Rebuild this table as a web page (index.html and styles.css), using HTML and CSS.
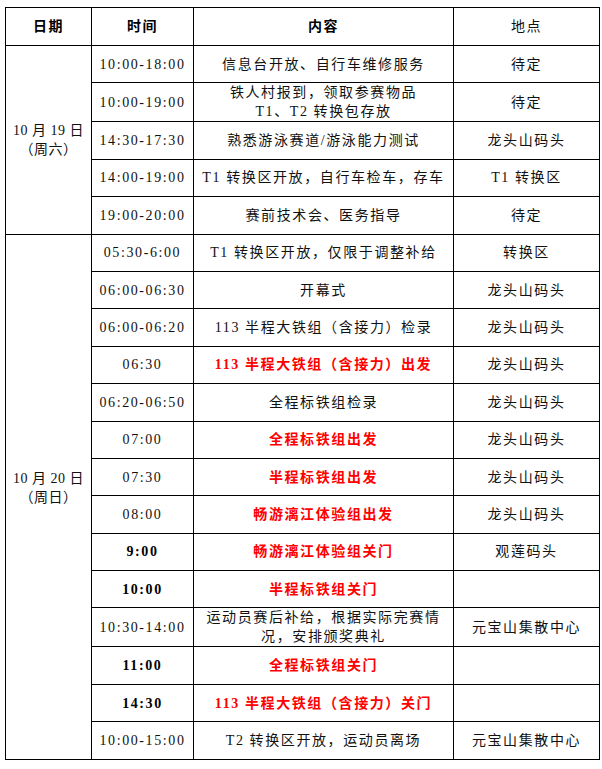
FILE: index.html
```html
<!DOCTYPE html>
<html lang="zh-CN">
<head>
<meta charset="utf-8">
<title>赛事日程</title>
<link rel="stylesheet" href="styles.css">
</head>
<body>
<table class="schedule">
  <colgroup>
    <col class="c-date">
    <col class="c-time">
    <col class="c-content">
    <col class="c-place">
  </colgroup>
  <thead>
    <tr class="head">
      <th class="b">日期</th>
      <th class="b">时间</th>
      <th class="b">内容</th>
      <th>地点</th>
    </tr>
  </thead>
  <tbody>
    <tr>
      <td rowspan="5" class="date">10 月 19 日<br>（周六）</td>
      <td>10:00-18:00</td>
      <td>信息台开放、自行车维修服务</td>
      <td>待定</td>
    </tr>
    <tr>
      <td>10:00-19:00</td>
      <td class="two">铁人村报到，领取参赛物品<br>T1、T2 转换包存放</td>
      <td>待定</td>
    </tr>
    <tr>
      <td>14:30-17:30</td>
      <td>熟悉游泳赛道/游泳能力测试</td>
      <td>龙头山码头</td>
    </tr>
    <tr>
      <td>14:00-19:00</td>
      <td>T1 转换区开放，自行车检车，存车</td>
      <td>T1 转换区</td>
    </tr>
    <tr>
      <td>19:00-20:00</td>
      <td>赛前技术会、医务指导</td>
      <td>待定</td>
    </tr>
    <tr>
      <td rowspan="14" class="date date-late">10 月 20 日<br>（周日）</td>
      <td>05:30-6:00</td>
      <td>T1 转换区开放，仅限于调整补给</td>
      <td>转换区</td>
    </tr>
    <tr>
      <td>06:00-06:30</td>
      <td>开幕式</td>
      <td>龙头山码头</td>
    </tr>
    <tr>
      <td>06:00-06:20</td>
      <td>113 半程大铁组（含接力）检录</td>
      <td>龙头山码头</td>
    </tr>
    <tr>
      <td>06:30</td>
      <td class="red">113 半程大铁组（含接力）出发</td>
      <td>龙头山码头</td>
    </tr>
    <tr>
      <td>06:20-06:50</td>
      <td>全程标铁组检录</td>
      <td>龙头山码头</td>
    </tr>
    <tr>
      <td>07:00</td>
      <td class="red">全程标铁组出发</td>
      <td>龙头山码头</td>
    </tr>
    <tr>
      <td>07:30</td>
      <td class="red">半程标铁组出发</td>
      <td>龙头山码头</td>
    </tr>
    <tr>
      <td>08:00</td>
      <td class="red">畅游漓江体验组出发</td>
      <td>龙头山码头</td>
    </tr>
    <tr>
      <td class="b">9:00</td>
      <td class="red">畅游漓江体验组关门</td>
      <td>观莲码头</td>
    </tr>
    <tr>
      <td class="b">10:00</td>
      <td class="red">半程标铁组关门</td>
      <td></td>
    </tr>
    <tr>
      <td>10:30-14:00</td>
      <td class="two">运动员赛后补给，根据实际完赛情<br>况，安排颁奖典礼</td>
      <td>元宝山集散中心</td>
    </tr>
    <tr>
      <td class="b">11:00</td>
      <td class="red">全程标铁组关门</td>
      <td></td>
    </tr>
    <tr>
      <td class="b">14:30</td>
      <td class="red">113 半程大铁组（含接力）关门</td>
      <td></td>
    </tr>
    <tr>
      <td>10:00-15:00</td>
      <td>T2 转换区开放，运动员离场</td>
      <td>元宝山集散中心</td>
    </tr>
  </tbody>
</table>
</body>
</html>
```

FILE: styles.css
```css
html, body {
  margin: 0;
  padding: 0;
  background: #ffffff;
}

body {
  padding: 7px 0 0 5px;
  font-family: "Liberation Serif", "Noto Sans CJK SC", serif;
  font-size: 14px;
  color: #111111;
}

.schedule {
  border-collapse: collapse;
  table-layout: fixed;
  width: 594px;
}

.c-date { width: 86px; }
.c-time { width: 102px; }
.c-content { width: 260px; }
.c-place { width: 146px; }

.schedule th,
.schedule td {
  border: 1px solid #000000;
  padding: 0 2px;
  text-align: center;
  vertical-align: middle;
  font-weight: normal;
  letter-spacing: 1.6px;
  line-height: 19px;
  white-space: nowrap;
}

.schedule tr {
  height: 37.4px;
}

.schedule .head {
  height: 38px;
}

.schedule .b {
  font-weight: bold;
  color: #000000;
}

.schedule .red {
  color: #ff0000;
  font-weight: bold;
}

.schedule .date {
  line-height: 19px;
  letter-spacing: 0.5px;
}

.schedule .date-late {
  padding-bottom: 18px;
}

.schedule .two {
  line-height: 19px;
}
```
